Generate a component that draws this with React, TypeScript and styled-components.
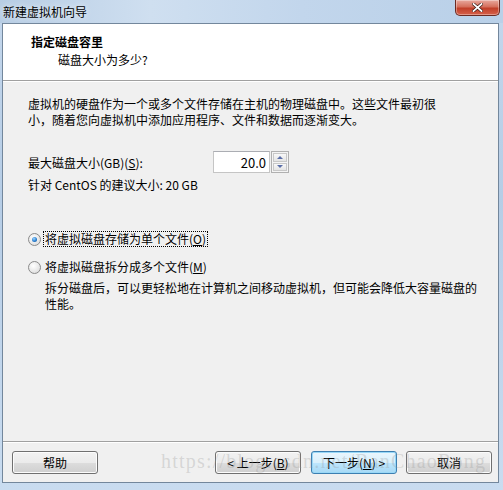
import React, { useState } from "react";
import styled, { createGlobalStyle } from "styled-components";

const GlobalStyle = createGlobalStyle`
  html, body {
    margin: 0;
    padding: 0;
    background: #ffffff;
  }
  body {
    font-family: "Noto Sans CJK SC", "Liberation Sans", sans-serif;
    font-size: 12px;
    color: #000000;
  }
`;

const Window = styled.div`
  width: 503px;
  height: 490px;
  display: flex;
  flex-direction: column;
  background: linear-gradient(180deg, #c4d7ec 0%, #b6cde6 40%, #c9dcf0 100%);
  box-sizing: border-box;
`;

const TitleBar = styled.div`
  height: 23px;
  display: flex;
  align-items: flex-start;
  justify-content: space-between;
  padding-left: 3px;
  padding-right: 3px;
  background: linear-gradient(90deg, #b7cde4 0%, #cfdff0 30%, #c2d6ec 60%, #b9d0e8 100%);
`;

const TitleText = styled.div`
  margin-top: 3px;
  font-size: 12px;
  line-height: 17px;
  color: #000;
  text-shadow: 0 0 6px rgba(255, 255, 255, 0.9);
`;

const CloseButton = styled.div`
  width: 43px;
  height: 15px;
  border: 1px solid #6b2a22;
  border-top: none;
  border-radius: 0 0 5px 5px;
  background: linear-gradient(180deg, #e8a99e 0%, #d56f5c 45%, #c13f29 55%, #d6614a 100%);
  box-shadow: inset 0 0 0 1px rgba(255, 255, 255, 0.35);
  display: flex;
  align-items: center;
  justify-content: center;
`;

const Client = styled.div`
  flex: 1;
  margin: 0 4px 7px 2px;
  border: 1px solid #73879c;
  background: #f0f0f0;
  display: flex;
  flex-direction: column;
  position: relative;
`;

const Header = styled.div`
  height: 57px;
  background: #ffffff;
  border-bottom: 1px solid #a0a0a0;
  box-shadow: 0 1px 0 #ffffff;
  padding: 9px 0 0 28px;
  box-sizing: border-box;
`;

const HeaderTitle = styled.div`
  font-weight: bold;
  line-height: 18px;
`;

const HeaderSub = styled.div`
  padding-left: 27px;
  line-height: 18px;
`;

const Body = styled.div`
  flex: 1;
  padding: 15px 12px 0 25px;
  display: flex;
  flex-direction: column;
`;

const Paragraph = styled.div`
  line-height: 16px;
  width: 420px;
`;

const SizeRow = styled.div`
  margin-top: 23px;
  height: 22px;
  display: flex;
  align-items: center;
`;

const SizeLabel = styled.div`
  width: 185px;
`;

const Underline = styled.span`
  text-decoration: underline;
`;

const Spin = styled.div`
  display: flex;
  align-items: stretch;
  height: 22px;
  gap: 1px;
`;

const SpinInput = styled.div`
  width: 57px;
  border: 1px solid #c5c5c5;
  border-top-color: #abadb3;
  background: #ffffff;
  display: flex;
  align-items: center;
  justify-content: flex-end;
  padding-right: 3px;
  box-sizing: border-box;
  font-size: 13px;
`;

const SpinButtons = styled.div`
  width: 18px;
  border: 1px solid #b0b0b0;
  background: #f4f4f4;
  display: flex;
  flex-direction: column;
  gap: 1px;
  padding: 1px;
  box-sizing: border-box;
`;

const SpinArrow = styled.div<{ down?: boolean }>`
  flex: 1;
  border: 1px solid #c8c8c8;
  background: linear-gradient(180deg, #f8f8f8, #e4e4e4);
  display: flex;
  align-items: center;
  justify-content: center;
  &::after {
    content: "";
    width: 0;
    height: 0;
    border-left: 3px solid transparent;
    border-right: 3px solid transparent;
    ${({ down }) =>
      down ? "border-top: 3px solid #5a6ea8;" : "border-bottom: 3px solid #5a6ea8;"}
  }
`;

const Hint = styled.div`
  margin-top: 4px;
  line-height: 16px;
`;

const RadioGroup = styled.div`
  margin-top: 38px;
  display: flex;
  flex-direction: column;
  gap: 12px;
`;

const RadioRow = styled.div`
  display: flex;
  align-items: center;
  height: 16px;
  gap: 3px;
  cursor: default;
`;

const RadioCircle = styled.div<{ checked: boolean }>`
  width: 11px;
  height: 11px;
  border-radius: 50%;
  border: 1px solid #8a8a8a;
  background: radial-gradient(circle at 40% 35%, #ffffff 0%, #e2e2e2 70%, #cfcfcf 100%);
  display: flex;
  align-items: center;
  justify-content: center;
  &::after {
    content: "";
    width: 5px;
    height: 5px;
    border-radius: 50%;
    background: ${({ checked }) =>
      checked ? "radial-gradient(circle at 40% 35%, #9fd6ff 0%, #2a7fd0 55%, #0c4a8e 100%)" : "transparent"};
  }
`;

const RadioLabel = styled.span<{ focused: boolean }>`
  padding: 0 1px;
  line-height: 14px;
  outline: ${({ focused }) => (focused ? "1px dotted #000" : "none")};
  outline-offset: 0;
`;

const Description = styled.div`
  margin-top: 5px;
  padding-left: 17px;
  line-height: 16px;
  width: 440px;
`;

const Footer = styled.div`
  height: 41px;
  border-top: 1px solid #a0a0a0;
  box-shadow: inset 0 1px 0 #ffffff;
  display: flex;
  align-items: flex-start;
  padding: 9px 6px 0 9px;
  box-sizing: border-box;
  position: relative;
`;

const Button = styled.div<{ primary?: boolean }>`
  width: 86px;
  height: 23px;
  box-sizing: border-box;
  border: 1px solid ${({ primary }) => (primary ? "#3c7fb1" : "#707070")};
  border-radius: 3px;
  background: ${({ primary }) =>
    primary
      ? "linear-gradient(180deg, #eaf6fd 0%, #d9f0fc 50%, #bee6fd 51%, #a7d9f5 100%)"
      : "linear-gradient(180deg, #f2f2f2 0%, #ebebeb 50%, #dddddd 51%, #cfcfcf 100%)"};
  box-shadow: inset 0 0 0 1px ${({ primary }) => (primary ? "#99d8f7" : "#fcfcfc")};
  display: flex;
  align-items: center;
  justify-content: center;
  font-size: 12px;
`;

const Spacer = styled.div`
  flex: 1;
`;

const ButtonGroup = styled.div`
  display: flex;
  gap: 10px;
`;

const CancelSlot = styled.div`
  margin-left: 9px;
`;

const Watermark = styled.div`
  position: absolute;
  left: 158px;
  top: 8px;
  font-family: "Liberation Serif", serif;
  font-size: 20px;
  letter-spacing: 1.2px;
  color: rgba(150, 150, 150, 0.3);
  pointer-events: none;
  white-space: nowrap;
`;

const App: React.FC = () => {
  const [split, setSplit] = useState(false);

  return (
    <>
      <GlobalStyle />
      <Window>
        <TitleBar>
          <TitleText>新建虚拟机向导</TitleText>
          <CloseButton>
            <svg width="11" height="9" viewBox="0 0 11 9">
              <path
                d="M1.5 1 L9.5 8 M9.5 1 L1.5 8"
                stroke="#3a1a14"
                strokeWidth="3.2"
                strokeLinecap="square"
              />
              <path
                d="M1.5 1 L9.5 8 M9.5 1 L1.5 8"
                stroke="#ffffff"
                strokeWidth="1.8"
                strokeLinecap="square"
              />
            </svg>
          </CloseButton>
        </TitleBar>
        <Client>
          <Header>
            <HeaderTitle>指定磁盘容里</HeaderTitle>
            <HeaderSub>磁盘大小为多少?</HeaderSub>
          </Header>
          <Body>
            <Paragraph>
              虚拟机的硬盘作为一个或多个文件存储在主机的物理磁盘中。这些文件最初很小，随着您向虚拟机中添加应用程序、文件和数据而逐渐变大。
            </Paragraph>
            <SizeRow>
              <SizeLabel>
                最大磁盘大小(GB)(<Underline>S</Underline>):
              </SizeLabel>
              <Spin>
                <SpinInput>20.0</SpinInput>
                <SpinButtons>
                  <SpinArrow />
                  <SpinArrow down />
                </SpinButtons>
              </Spin>
            </SizeRow>
            <Hint>针对 CentOS 的建议大小: 20 GB</Hint>
            <RadioGroup>
              <RadioRow onClick={() => setSplit(false)}>
                <RadioCircle checked={!split} />
                <RadioLabel focused={!split}>
                  将虚拟磁盘存储为单个文件(<Underline>O</Underline>)
                </RadioLabel>
              </RadioRow>
              <RadioRow onClick={() => setSplit(true)}>
                <RadioCircle checked={split} />
                <RadioLabel focused={split}>
                  将虚拟磁盘拆分成多个文件(<Underline>M</Underline>)
                </RadioLabel>
              </RadioRow>
            </RadioGroup>
            <Description>
              拆分磁盘后，可以更轻松地在计算机之间移动虚拟机，但可能会降低大容量磁盘的性能。
            </Description>
          </Body>
          <Footer>
            <Button>帮助</Button>
            <Spacer />
            <ButtonGroup>
              <Button>
                &lt; 上一步(<Underline>B</Underline>)
              </Button>
              <Button primary>
                下一步(<Underline>N</Underline>) &gt;
              </Button>
            </ButtonGroup>
            <CancelSlot>
              <Button>取消</Button>
            </CancelSlot>
            <Watermark>https://blog.csdn.net/RanChaoRong</Watermark>
          </Footer>
        </Client>
      </Window>
    </>
  );
};

export default App;
